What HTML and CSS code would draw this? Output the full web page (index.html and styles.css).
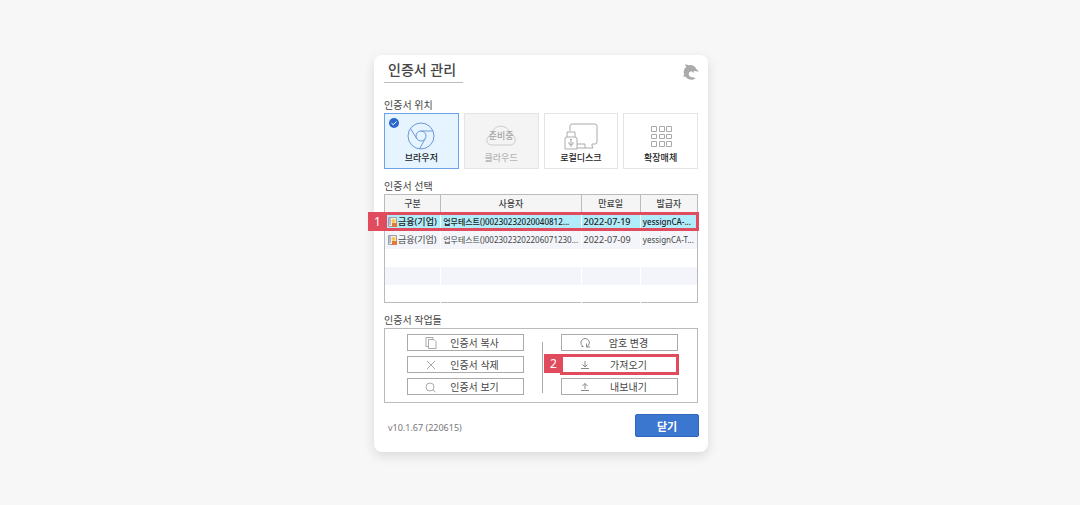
FILE: index.html
```html
<!DOCTYPE html>
<html lang="ko">
  <head>
    <meta charset="UTF-8" />
    <meta name="viewport" content="width=device-width, initial-scale=1.0" />
    <title>인증서 관리</title>
    <link rel="stylesheet" href="styles.css">
  </head>
  <body>
    <main class="dialog">
      <header class="dialog-header">
        <h1>인증서 관리</h1>
        <svg class="logo" viewBox="0 0 16 16" aria-hidden="true">
          <path d="M2 .5C3.500.2 4.700.6 5.500 1.200C9 .5 12 2 13.300 5L16 7.300C14.500 7.600 12.500 7.400 11 6.800L10.500 9L8.600 7.200C6.500 7.500 5.300 9.200 5.800 11C6.500 13 8.500 13.500 10.300 13.300L12.500 14.500L9.500 15.800C6 16 3.500 14.500 2.500 12.500L0 12.800L1.200 10.500C0 8 .8 5 3.300 2.800Z" />
        </svg>
      </header>

      <h2>인증서 위치</h2>
      <div class="locations">
        <button type="button" class="location selected">
          <svg class="check" viewBox="0 0 10 10" aria-hidden="true">
            <circle cx="5" cy="5" r="5" />
            <path d="M2.500 5.200L4.300 6.800L7.500 3.500" />
          </svg>
          <svg class="location-icon" viewBox="0 0 36 28" aria-hidden="true">
            <circle cx="18" cy="14" r="13" />
            <circle cx="18" cy="14" r="5" />
            <path d="M18 9H30M13.700 16.500L7.500 6.500M22.300 16.500L16.500 27" />
          </svg>
          <span>브라우저</span>
        </button>
        <button type="button" class="location" disabled>
          <svg class="location-icon" viewBox="0 0 36 28" aria-hidden="true">
            <path d="M9 23C2 23 2 14 9 13C9 2 25 1 27 12C34 13 34 23 27 23Z" />
          </svg>
          <span class="pending">준비중</span>
          <span>클라우드</span>
        </button>
        <button type="button" class="location">
          <svg class="location-icon" viewBox="0 0 36 28" aria-hidden="true">
            <path d="M7 9V4Q7 2 9 2H32Q34 2 34 4V20Q34 22 32 22H29V24L30 26H14M14 22H22V26" />
            <path d="M4 15V10H12V15M2 27V17Q2 15 4 15H12Q14 15 14 17V27Z" />
            <path d="M8 25V17M7 18L8 17L9 18M6 20V22L8 23L10 22V20" />
          </svg>
          <span>로컬디스크</span>
        </button>
        <button type="button" class="location">
          <svg class="location-icon" viewBox="0 0 36 28" aria-hidden="true">
            <path d="M8.500 4.500h5v5h-5zM16.500 4.500h5v5h-5zM23.500 4.500h5v5h-5zM8.500 12.500h5v4h-5zM16.500 12.500h5v4h-5zM23.500 12.500h5v4h-5zM8.500 19.500h5v5h-5zM16.500 19.500h5v5h-5zM23.500 19.500h5v5h-5z" />
          </svg>
          <span>확장매체</span>
        </button>
      </div>

      <h2>인증서 선택</h2>
      <div class="cert-list">
        <table>
          <thead>
            <tr>
              <th class="col-type">구분</th>
              <th class="col-user">사용자</th>
              <th class="col-date">만료일</th>
              <th class="col-issuer">발급자</th>
            </tr>
          </thead>
          <tbody>
            <tr class="active">
              <td>
                <svg class="cert-icon" viewBox="0 0 9 10" aria-hidden="true">
                  <path class="paper" d="M.5.5H8.500V9.500H.5Z" />
                  <path class="lines" d="M2 1V8" />
                  <circle cx="5.500" cy="4" r="2" />
                  <path class="seal" d="M4 6H9V10H4Z" />
                </svg>금융(기업)
              </td>
              <td class="long">업무테스트()00230232020040812...</td>
              <td>2022-07-19</td>
              <td class="long">yessignCA-...</td>
            </tr>
            <tr>
              <td>
                <svg class="cert-icon" viewBox="0 0 9 10" aria-hidden="true">
                  <path class="paper" d="M.5.5H8.500V9.500H.5Z" />
                  <path class="lines" d="M2 1V8" />
                  <circle cx="5.500" cy="4" r="2" />
                  <path class="seal" d="M4 6H9V10H4Z" />
                </svg>금융(기업)
              </td>
              <td class="long">업무테스트()0023023202206071230...</td>
              <td>2022-07-09</td>
              <td class="long">yessignCA-T...</td>
            </tr>
            <tr><td></td><td></td><td></td><td></td></tr>
            <tr><td></td><td></td><td></td><td></td></tr>
            <tr><td></td><td></td><td></td><td></td></tr>
          </tbody>
        </table>
        <div class="marker row-marker"><span>1</span></div>
      </div>

      <h2>인증서 작업들</h2>
      <div class="tasks">
        <div class="task-group">
          <button type="button">
            <svg viewBox="0 0 12 12" aria-hidden="true"><path d="M3 9.500H1V.5H8V2M3.500 2.500H9L11 4.500V11.500H3.500Z" /></svg>
            <span>인증서 복사</span>
          </button>
          <button type="button">
            <svg viewBox="0 0 12 12" aria-hidden="true"><path d="M2 2L10 10M10 2L2 10" /></svg>
            <span>인증서 삭제</span>
          </button>
          <button type="button">
            <svg viewBox="0 0 12 12" aria-hidden="true"><circle cx="5" cy="6" r="4" /><path d="M8 9L10.500 11" /></svg>
            <span>인증서 보기</span>
          </button>
        </div>
        <div class="task-group">
          <button type="button">
            <svg class="bold" viewBox="0 0 12 12" aria-hidden="true"><path d="M4.500 9.500H2.500M3.500 9A4.200 4.200 0 1 1 8 9.500M7.500 6.500V10H11" /></svg>
            <span>암호 변경</span>
          </button>
          <div class="task-marked">
            <button type="button">
              <svg class="bold" viewBox="0 0 12 12" aria-hidden="true"><path d="M6 2V8M3.500 5.500L6 8L8.500 5.500M2 9.500H10" /></svg>
              <span>가져오기</span>
            </button>
            <div class="marker task-marker"><span>2</span></div>
          </div>
          <button type="button">
            <svg class="bold" viewBox="0 0 12 12" aria-hidden="true"><path d="M6 8V2.500M3.500 5L6 2.500L8.500 5M2 9.500H10" /></svg>
            <span>내보내기</span>
          </button>
        </div>
      </div>

      <footer>
        <span>v10.1.67 (220615)</span>
        <button type="button" class="close">닫기</button>
      </footer>
    </main>
  </body>
</html>
```
FILE: styles.css
```css
* {
  box-sizing: border-box;
}
body {
  margin: 0;
  padding-left: 2px;
  min-height: 100vh;
  display: flex;
  justify-content: center;
  align-items: center;
  background: #f7f7f7;
  color: #444;
  font-family: "Noto Sans", "Noto Sans CJK KR", sans-serif;
  font-size: 9px;
}
button {
  font-family: inherit;
  font-size: inherit;
  color: inherit;
  padding: 0;
  cursor: pointer;
}
svg {
  fill: none;
  stroke: #aaa;
}
.dialog {
  width: 100%;
  max-width: 334px;
  padding: 4px 10px 15px;
  margin-top: 2px;
  background: #fff;
  border-radius: 8px;
  box-shadow: 0 4px 12px rgba(0, 0, 0, 0.12);
}
.dialog-header {
  display: flex;
  justify-content: space-between;
  align-items: center;
  margin-bottom: 14px;
}
h1 {
  margin: 0;
  padding: 0 7px 0 4px;
  height: 24px;
  line-height: 22px;
  font-size: 14px;
  font-weight: 500;
  border-bottom: 1px solid #bbb;
}
.logo {
  width: 16px;
  height: 16px;
  margin: 2px -1px 0 0;
  fill: #aaa;
  stroke: none;
}
h2 {
  margin: 0;
  font-size: 10px;
  line-height: 16px;
  font-weight: 400;
}

/* storage location tiles */
.locations {
  display: grid;
  grid-template-columns: repeat(4, 1fr);
  gap: 5px;
  margin-bottom: 9px;
}
.location {
  position: relative;
  display: flex;
  flex-direction: column;
  align-items: center;
  height: 56px;
  padding-top: 8px;
  background: #fff;
  border: 1px solid #e4e4e4;
  color: #222;
  font-weight: 500;
  line-height: 15px;
}
.location-icon {
  width: 36px;
  height: 28px;
}
.location.selected {
  background: #e6f4ff;
  border-color: #6fa3e8;
}
.location.selected .location-icon {
  stroke: #6c98db;
}
.location:disabled {
  background: #f4f4f4;
  color: #b4b4b4;
  cursor: default;
}
.location:disabled .location-icon {
  stroke: #ccc;
}
.check {
  position: absolute;
  top: 4px;
  left: 4px;
  width: 10px;
  height: 10px;
}
.check circle {
  fill: #2b66cc;
  stroke: none;
}
.check path {
  stroke: #fff;
}
.pending {
  position: absolute;
  top: 14px;
  color: #a4a4a4;
}

/* certificate table */
.cert-list {
  position: relative;
  height: 109px;
  margin-bottom: 9px;
  border: 1px solid #bbb;
}
table {
  width: 100%;
  table-layout: fixed;
  border-collapse: separate;
  border-spacing: 0;
}
.col-type {
  width: 18%;
}
.col-user {
  width: 45%;
}
.col-date {
  width: 19%;
}
.col-issuer {
  width: 18%;
}
th {
  height: 18px;
  padding: 0;
  line-height: 16px;
  font-weight: 500;
  background: #f5f5f5;
  border-right: 1px solid #bbb;
  border-bottom: 1px solid #bbb;
}
th:last-child,
td:last-child {
  border-right: none;
}
td {
  height: 18px;
  padding: 0 2px;
  line-height: 16px;
  border-right: 1px solid #fff;
  white-space: nowrap;
}
.long {
  font-size: 8px;
}
tbody tr:nth-child(even) {
  background: #f3f5fa;
}
tbody .active {
  background: #b1ecfb;
  color: #222;
  font-weight: 500;
}
.cert-icon {
  width: 9px;
  height: 10px;
  margin: 0 1px;
  vertical-align: -2px;
}
.cert-icon .paper {
  fill: #f5efe4;
  stroke: #9a9fae;
}
.cert-icon .lines {
  stroke: #6b88bd;
}
.cert-icon circle {
  fill: #f8c744;
  stroke: none;
}
.cert-icon .seal {
  fill: #e3793b;
  stroke: none;
}

/* numbered red callouts */
.marker {
  position: absolute;
  border: 3px solid #e04b5d;
  pointer-events: none;
}
.marker span {
  position: absolute;
  top: -3px;
  right: 100%;
  width: 19px;
  background: #e04b5d;
  color: #fff;
  font-size: 12px;
  line-height: 19px;
  text-align: center;
}
.row-marker {
  top: 17px;
  left: -1px;
  right: -2px;
  height: 19px;
}
.task-marker {
  inset: -2px -1px;
}

/* task buttons */
.tasks {
  display: grid;
  grid-template-columns: 1fr 1fr;
  padding: 5px 0 7px;
  margin-bottom: 11px;
  border: 1px solid #bbb;
}
.task-group {
  display: flex;
  flex-direction: column;
  gap: 5px;
  padding: 0 17px 0 22px;
}
.task-group:last-child {
  position: relative;
  padding: 0 19px 0 20px;
}
.task-group:last-child::before {
  content: "";
  position: absolute;
  top: 8px;
  bottom: 2px;
  left: 1px;
  width: 1px;
  background: #aaa;
}
.task-group button {
  display: flex;
  align-items: center;
  width: 100%;
  height: 17px;
  padding: 0 11px 0 17px;
  background: #fff;
  border: 1px solid #aaa;
  font-size: 10px;
  line-height: 14px;
}
.task-group svg {
  width: 12px;
  height: 12px;
}
.task-group .bold {
  stroke: #888;
}
.task-group button span {
  flex: 1;
}
.task-marked {
  position: relative;
}
footer {
  display: flex;
  justify-content: space-between;
  align-items: flex-end;
  padding-left: 4px;
  color: #777;
  line-height: 18px;
}
.close {
  width: 64px;
  height: 23px;
  margin-right: -1px;
  background: #3b77cf;
  border: 1px solid #2e67bb;
  border-radius: 2px;
  color: #fff;
  font-size: 11px;
  font-weight: 700;
}
```
